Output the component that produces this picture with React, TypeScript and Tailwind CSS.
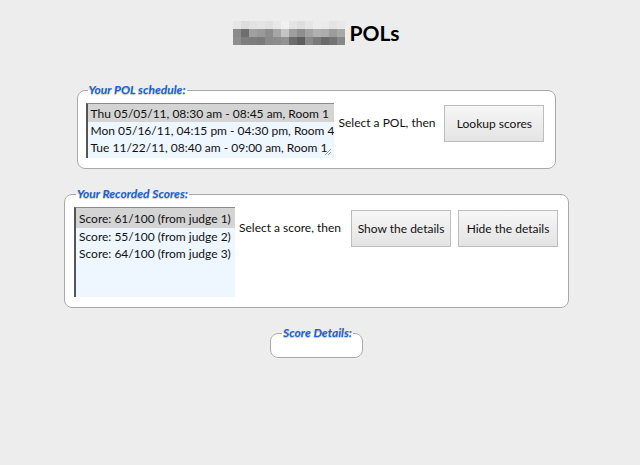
import React from 'react';

const mosaic = [
  ['#e6e6e6', '#dcdcdc', '#e2e2e2', '#e4e4e4', '#e0e0e0', '#e8e8e8', '#f0f0f0', '#e4e4e4', '#dedede', '#e6e6e6', '#ececec', '#eaeaea', '#e4e4e4', '#e8e8e8'],
  ['#8a8a8a', '#6e6e6e', '#a0a0a0', '#9a9a9a', '#8c8c8c', '#a6a6a6', '#c4c4c4', '#9e9e9e', '#8e8e8e', '#a2a2a2', '#b0b0b0', '#acacac', '#9c9c9c', '#a8a8a8'],
  ['#8e8e8e', '#7e7e7e', '#7c7c7c', '#7a7a7a', '#8a8a8a', '#8c8c8c', '#929292', '#6c6c6c', '#5e5e5e', '#8a8a8a', '#7a7a7a', '#6a6a6a', '#747474', '#888888'],
];

const schedule = [
  'Thu 05/05/11, 08:30 am - 08:45 am, Room 1',
  'Mon 05/16/11, 04:15 pm - 04:30 pm, Room 4',
  'Tue 11/22/11, 08:40 am - 09:00 am, Room 1',
];

const scores = [
  'Score: 61/100 (from judge 1)',
  'Score: 55/100 (from judge 2)',
  'Score: 64/100 (from judge 3)',
];

function Legend({ children }: { children: React.ReactNode }) {
  return (
    <legend className="ml-[2px] whitespace-nowrap px-[1px] text-[12px] font-bold italic leading-[14px] text-[#1a62cf] [text-shadow:0_1px_1px_rgba(0,0,0,0.25)]">
      {children}
    </legend>
  );
}

function Button({ children }: { children: React.ReactNode }) {
  return (
    <button className="h-[37px] w-[100px] whitespace-nowrap border border-[#bdbdbd] bg-gradient-to-b from-[#f6f6f6] to-[#e4e4e4] text-[12px] text-[#111]">
      {children}
    </button>
  );
}

export default function App() {
  return (
    <div className="min-h-[465px] w-full bg-[#ededed] font-['Lato',sans-serif] text-[12px] text-[#111]">
      <div className="flex w-[633px] flex-col items-center">
        <h1 className="mt-[21px] flex items-center gap-[4px] text-[21px] font-bold leading-[24px] text-black">
          <span className="flex flex-col">
            {mosaic.map((row, i) => (
              <span key={i} className="flex">
                {row.map((c, j) => (
                  <span key={j} className="h-[8px] w-[8px]" style={{ backgroundColor: c }} />
                ))}
              </span>
            ))}
          </span>
          <span>POLs</span>
        </h1>

        <fieldset className="mt-[38px] flex items-start rounded-[8px] border border-[#a9a9a9] bg-white pb-[10px] pl-[8px] pr-[11px] pt-[6px]">
          <Legend>Your POL schedule:</Legend>
          <div className="relative h-[55px] w-[248px] overflow-hidden whitespace-nowrap border-l-2 border-t border-l-[#555] border-t-[#8a8a8a] bg-[#eef6ff] leading-[17px]">
            {schedule.map((s, i) => (
              <div key={s} className={`pl-[3px] ${i === 0 ? 'bg-[#d4d4d4] pt-[1px]' : ''}`}>
                {s}
              </div>
            ))}
            <svg className="absolute bottom-[2px] right-[2px]" width="8" height="8" viewBox="0 0 8 8">
              <path d="M7 1 L1 7 M7 4 L4 7" stroke="#a0a0a0" strokeWidth="1" />
            </svg>
          </div>
          <span className="ml-[5px] mt-[11px] whitespace-nowrap">Select a POL, then</span>
          <div className="ml-[9px] mt-[2px]">
            <Button>Lookup scores</Button>
          </div>
        </fieldset>

        <fieldset className="mt-[18px] flex items-start rounded-[8px] border border-[#a9a9a9] bg-white pb-[10px] pl-[9px] pr-[10px] pt-[6px]">
          <Legend>Your Recorded Scores:</Legend>
          <div className="h-[90px] w-[161px] overflow-hidden whitespace-nowrap border-l-2 border-t border-l-[#555] border-t-[#8a8a8a] bg-[#eef6ff] leading-[17px]">
            {scores.map((s, i) => (
              <div key={s} className={`pl-[3px] ${i === 0 ? 'bg-[#d4d4d4] pb-[1px] pt-[2px]' : ''}`}>
                {s}
              </div>
            ))}
          </div>
          <span className="ml-[4px] mt-[12px] whitespace-nowrap">Select a score, then</span>
          <div className="ml-[10px] mt-[3px] flex gap-[7px]">
            <Button>Show the details</Button>
            <Button>Hide the details</Button>
          </div>
        </fieldset>

        <fieldset className="mt-[18px] h-[32px] w-[91px] rounded-[8px] border border-[#a9a9a9] bg-white px-[9px]">
          <Legend>Score Details:</Legend>
        </fieldset>
      </div>
    </div>
  );
}
